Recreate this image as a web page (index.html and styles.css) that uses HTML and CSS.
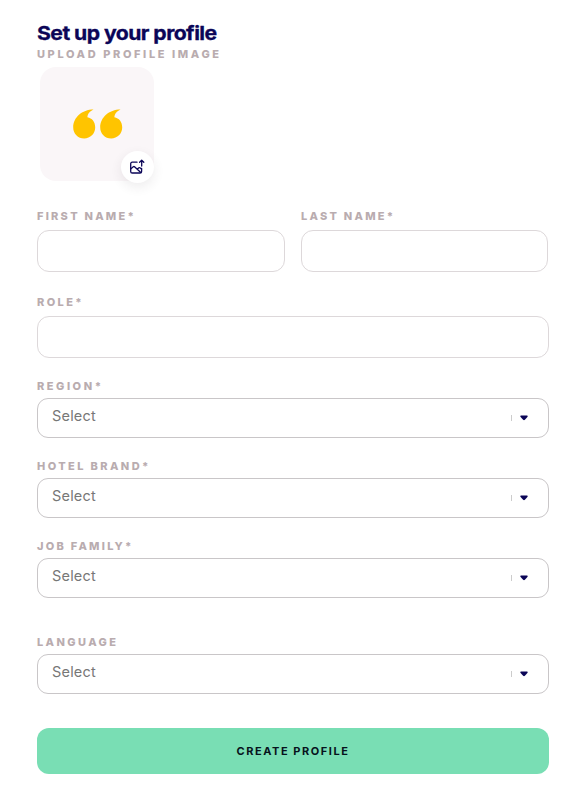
FILE: index.html
```html
<!DOCTYPE html>
<html lang="en">
<head>
<meta charset="utf-8">
<title>Set up your profile</title>
<link rel="stylesheet" href="styles.css">
</head>
<body>
<form class="profile">
  <h1 class="title">Set up your profile</h1>
  <div class="label label-widest">UPLOAD PROFILE IMAGE</div>
  <div class="avatar">
    <svg class="quotes" width="50" height="30" viewBox="0 0 50 30" fill="#ffc400">
      <path id="q" d="M20.500.4C9 .4.2 8.500.2 18.200.2 24.800 5 29.400 11.200 29.400 17.300 29.400 22.200 24.600 22.200 18.500 22.200 12.800 19 9.100 14.400 8.300 14.400 4.800 17 2.200 20.500.4Z"/>
      <use href="#q" x="27"/>
    </svg>
    <button class="upload" type="button" aria-label="Upload image">
      <svg width="16" height="16" viewBox="0 0 16 16" fill="none" stroke="#0b0557" stroke-width="1.300" stroke-linecap="round" stroke-linejoin="round">
        <path d="M8 3.200H3.300Q1.700 3.200 1.700 4.800V12.400Q1.700 14 3.300 14H11Q12.600 14 12.600 12.400V9.500"/>
        <path d="M1.900 9.700 4.300 7.700Q5 7.200 5.800 7.900L11.500 13.200M8.200 10 9.700 8.900Q10.500 8.400 11.300 9L12.500 10"/>
        <path d="M12.700 7V1.500M10.600 3.300 12.700 1.200 14.800 3.300"/>
      </svg>
    </button>
  </div>

  <div class="row">
    <label class="field"><span class="label label-tight">FIRST NAME*</span><input class="input" type="text"></label>
    <label class="field"><span class="label label-tight">LAST NAME*</span><input class="input" type="text"></label>
  </div>
  <label class="field role"><span class="label">ROLE*</span><input class="input" type="text"></label>

  <div class="field pick">
    <span class="label label-wide">REGION*</span>
    <div class="select"><span class="value">Select</span><span class="divider"></span><svg class="caret" width="8" height="6" viewBox="0 0 8 6"><path d="M1 .5H7Q8.200.8 7.400 1.900L4.900 4.800Q4 5.600 3.100 4.800L.6 1.900Q-.2.8 1 .5Z"/></svg></div>
  </div>
  <div class="field pick">
    <span class="label">HOTEL BRAND*</span>
    <div class="select"><span class="value">Select</span><span class="divider"></span><svg class="caret" width="8" height="6" viewBox="0 0 8 6"><path d="M1 .5H7Q8.200.8 7.400 1.900L4.900 4.800Q4 5.600 3.100 4.800L.6 1.900Q-.2.8 1 .5Z"/></svg></div>
  </div>
  <div class="field pick">
    <span class="label label-tight">JOB FAMILY*</span>
    <div class="select"><span class="value">Select</span><span class="divider"></span><svg class="caret" width="8" height="6" viewBox="0 0 8 6"><path d="M1 .5H7Q8.200.8 7.400 1.900L4.900 4.800Q4 5.600 3.100 4.800L.6 1.900Q-.2.8 1 .5Z"/></svg></div>
  </div>
  <div class="field pick language">
    <span class="label">LANGUAGE</span>
    <div class="select"><span class="value">Select</span><span class="divider"></span><svg class="caret" width="8" height="6" viewBox="0 0 8 6"><path d="M1 .5H7Q8.200.8 7.400 1.900L4.900 4.800Q4 5.600 3.100 4.800L.6 1.900Q-.2.8 1 .5Z"/></svg></div>
  </div>
  <button class="submit" type="button">CREATE PROFILE</button>
</form>
</body>
</html>
```
FILE: styles.css
```css
* { box-sizing: border-box; }
body {
  margin: 0;
  background: #fff;
  font-family: Inter, "Liberation Sans", sans-serif;
}
.profile {
  display: flex;
  flex-direction: column;
  padding: 20px 24px 0 37px;
}
.title {
  margin: 0;
  height: 26px;
  font-size: 19px;
  line-height: 27px;
  font-weight: 700;
  letter-spacing: -0.5px;
  color: #0b0557;
  -webkit-text-stroke: 0.3px #0b0557;
  transform: scaleX(1.115);
  transform-origin: left center;
  width: 200px;
  white-space: nowrap;
}
.label {
  display: block;
  height: 16px;
  font-size: 11px;
  line-height: 16px;
  font-weight: 800;
  letter-spacing: 2.4px;
  color: #b9acaf;
  white-space: nowrap;
}
.label-tight { letter-spacing: 2.25px; }
.label-wide { letter-spacing: 2.55px; }
.label-widest { letter-spacing: 2.62px; }
.avatar {
  position: relative;
  display: flex;
  align-items: center;
  justify-content: center;
  width: 114px;
  height: 114px;
  margin: 5px 0 0 3px;
  border-radius: 16px;
  background: #faf6f8;
}
.quotes { display: block; margin-left: 1px; }
.upload {
  position: absolute;
  right: 0;
  bottom: -2px;
  display: flex;
  align-items: center;
  justify-content: center;
  width: 33px;
  height: 32px;
  padding: 0 1px 0 0;
  border: 0;
  border-radius: 50%;
  background: #fff;
  box-shadow: 0 4px 12px rgba(60, 40, 50, 0.09);
}
.row {
  display: grid;
  grid-template-columns: 248px 247px;
  gap: 16px;
  margin-top: 27px;
}
.field { display: block; }
.input {
  display: block;
  width: 100%;
  height: 42px;
  margin: 6px 0 0;
  padding: 0 14px;
  border: 1px solid #ddd8da;
  border-radius: 12px;
  background: #fff;
  font: inherit;
}
.role { margin-top: 22px; }
.pick { margin-top: 20px; }
.language { margin-top: 36px; }
.select {
  display: flex;
  align-items: center;
  height: 40px;
  margin-top: 4px;
  padding: 0 20px 0 14px;
  border: 1px solid #c9c6c8;
  border-radius: 11px;
}
.value {
  flex: 1;
  padding-bottom: 4px;
  font-size: 14.5px;
  letter-spacing: 0.2px;
  line-height: 20px;
  color: #777;
}
.divider {
  width: 1px;
  height: 6px;
  margin-right: 8px;
  background: #ccc;
}
.caret { fill: #0b0557; }
.submit {
  height: 46px;
  margin-top: 34px;
  padding: 0;
  border: 0;
  border-radius: 12px;
  background: #79deb4;
  font-family: inherit;
  font-size: 11px;
  font-weight: 700;
  letter-spacing: 1.55px;
  color: #07131c;
}
```
